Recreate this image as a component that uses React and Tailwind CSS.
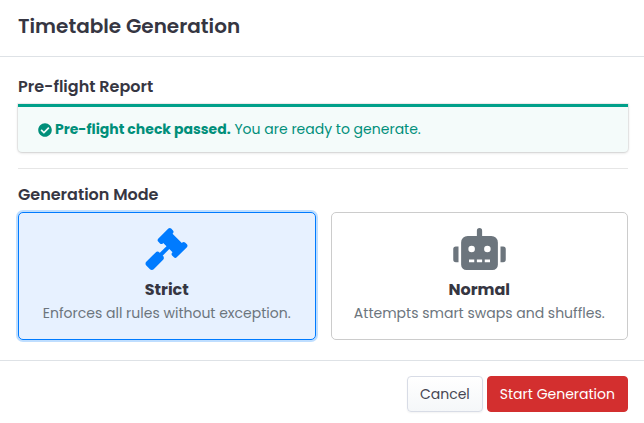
import { useState } from "react";
import { FaCheckCircle, FaGavel, FaRobot } from "react-icons/fa";

const MODES = [
  { id: "strict", title: "Strict", text: "Enforces all rules without exception.", Icon: FaGavel },
  { id: "normal", title: "Normal", text: "Attempts smart swaps and shuffles.", Icon: FaRobot },
];

function ModeCard({ mode, selected, onSelect }) {
  const { id, title, text, Icon } = mode;
  return (
    <label
      className={`flex cursor-pointer flex-col items-center rounded-[5px] border px-2 py-[15px] ${
        selected
          ? "border-[#007bff] bg-[#e7f1ff] ring-2 ring-[#007bff]/25"
          : "border-[#cccccc] bg-white"
      }`}
    >
      <input
        type="radio"
        name="mode"
        value={id}
        checked={selected}
        onChange={() => onSelect(id)}
        className="sr-only"
      />
      <Icon className={`h-[42px] w-[53px] ${selected ? "text-[#007bff]" : "text-[#6c757d]"}`} />
      <span className="mt-2 text-base leading-6 font-bold text-[#363642]">{title}</span>
      <span className="text-sm leading-[22px] text-[#6c757d]">{text}</span>
    </label>
  );
}

export default function App() {
  const [mode, setMode] = useState("strict");

  return (
    <div className="bg-white font-[Poppins,Inter,sans-serif] text-sm text-[#363642]">
      <header className="border-b border-[#dee2e6] pt-3.5 pr-4 pb-[18px] pl-[18px]">
        <h1 className="text-xl leading-6 font-semibold">Timetable Generation</h1>
      </header>

      <main className="pt-5 pr-4 pb-5 pl-[18px]">
        <h2 className="mb-[7px] text-base leading-5 font-semibold">Pre-flight Report</h2>
        <div className="rounded-b border-t-[3px] border-[#00a08a] bg-[#f4fbfa] px-5 py-3 text-[#008f7a] shadow-[0_0_1px_1px_rgba(0,0,0,0.07),0_1px_3px_rgba(0,0,0,0.14)]">
          <p className="flex items-center gap-[3px] leading-[21px]">
            <FaCheckCircle className="size-3.5 shrink-0" />
            <span>
              <strong className="font-bold">Pre-flight check passed.</strong> You are ready to generate.
            </span>
          </p>
        </div>

        <hr className="my-4 border-[#e6e6e6]" />

        <fieldset>
          <legend className="mb-[7px] text-base leading-5 font-semibold">Generation Mode</legend>
          <div className="grid grid-cols-2 gap-[15px]">
            {MODES.map((m) => (
              <ModeCard key={m.id} mode={m} selected={mode === m.id} onSelect={setMode} />
            ))}
          </div>
        </fieldset>
      </main>

      <footer className="flex justify-end gap-1 border-t border-[#dee2e6] py-[15px] pr-4 pl-[18px]">
        <button
          type="button"
          className="h-9 rounded border border-[#d8dce6] bg-linear-to-b from-white to-[#f5f7f9] px-3 text-[#464652] shadow-xs"
        >
          Cancel
        </button>
        <button type="button" className="h-9 rounded border border-[#d32f2f] bg-[#d32f2f] px-3 text-white">
          Start Generation
        </button>
      </footer>
    </div>
  );
}
